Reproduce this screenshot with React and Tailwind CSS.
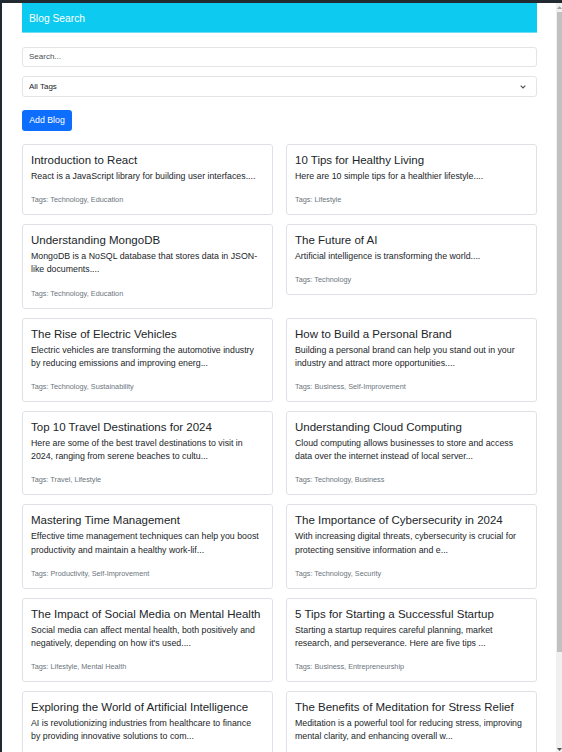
import React from "react";

const blogs = [
  { title: "Introduction to React", desc: "React is a JavaScript library for building user interfaces....", tags: "Technology, Education" },
  { title: "10 Tips for Healthy Living", desc: "Here are 10 simple tips for a healthier lifestyle....", tags: "Lifestyle" },
  { title: "Understanding MongoDB", desc: "MongoDB is a NoSQL database that stores data in JSON-like documents....", tags: "Technology, Education" },
  { title: "The Future of AI", desc: "Artificial intelligence is transforming the world....", tags: "Technology" },
  { title: "The Rise of Electric Vehicles", desc: "Electric vehicles are transforming the automotive industry by reducing emissions and improving energ...", tags: "Technology, Sustainability" },
  { title: "How to Build a Personal Brand", desc: "Building a personal brand can help you stand out in your industry and attract more opportunities....", tags: "Business, Self-Improvement" },
  { title: "Top 10 Travel Destinations for 2024", desc: "Here are some of the best travel destinations to visit in 2024, ranging from serene beaches to cultu...", tags: "Travel, Lifestyle" },
  { title: "Understanding Cloud Computing", desc: "Cloud computing allows businesses to store and access data over the internet instead of local server...", tags: "Technology, Business" },
  { title: "Mastering Time Management", desc: "Effective time management techniques can help you boost productivity and maintain a healthy work-lif...", tags: "Productivity, Self-Improvement" },
  { title: "The Importance of Cybersecurity in 2024", desc: "With increasing digital threats, cybersecurity is crucial for protecting sensitive information and e...", tags: "Technology, Security" },
  { title: "The Impact of Social Media on Mental Health", desc: "Social media can affect mental health, both positively and negatively, depending on how it's used....", tags: "Lifestyle, Mental Health" },
  { title: "5 Tips for Starting a Successful Startup", desc: "Starting a startup requires careful planning, market research, and perseverance. Here are five tips ...", tags: "Business, Entrepreneurship" },
  { title: "Exploring the World of Artificial Intelligence", desc: "AI is revolutionizing industries from healthcare to finance by providing innovative solutions to com...", tags: "Technology, Innovation" },
  { title: "The Benefits of Meditation for Stress Relief", desc: "Meditation is a powerful tool for reducing stress, improving mental clarity, and enhancing overall w...", tags: "Lifestyle, Health" },
];

function Card({ b }) {
  return (
    <div className="border border-[#dee2e6] rounded-[3px] bg-white pl-[8px] pr-[10px] py-[9px]">
      <h5 className="text-[11.5px] leading-[12px] mb-[4px] text-[#212529] whitespace-nowrap">{b.title}</h5>
      <p className="text-[8.8px] leading-[13.2px] mb-[11px] text-[#212529]">{b.desc}</p>
      <p className="text-[7.3px] leading-[11px] text-[#6c757d]">Tags: {b.tags}</p>
    </div>
  );
}

export default function App() {
  return (
    <div className="w-[562px] h-[752px] overflow-hidden bg-[#202a30] pt-[3px] pl-[2px] flex" style={{ fontFamily: '"Liberation Sans", Arial, sans-serif' }}>
      <div className="flex-1 bg-white overflow-hidden">
        <div className="pl-[20px] pr-[19px]">
          <div className="bg-[#0dcaf0] h-[30px] border-b border-[#6fdff5] flex items-center px-[7px] pt-[2px]">
            <span className="text-white text-[10.3px]">Blog Search</span>
          </div>
          <div className="mt-[14px] h-[20px] border border-[#e2e5e8] rounded-[3px] flex items-center px-[6px]">
            <span className="text-[8px] text-[#4a4f55]">Search...</span>
          </div>
          <div className="mt-[9px] h-[21px] border border-[#e2e5e8] rounded-[3px] flex items-center justify-between pl-[6px] pr-[10px]">
            <span className="text-[8px] text-[#212529]">All Tags</span>
            <svg width="6" height="4" viewBox="0 0 6 4" fill="none"><path d="M0.7 0.7l2.3 2.3L5.3 0.7" stroke="#4a4f55" strokeWidth="1.1" /></svg>
          </div>
          <div className="mt-[13px] flex">
            <div className="flex items-center justify-center h-[21px] w-[50px] bg-[#0d6efd] rounded-[3px] text-white text-[8.8px]">Add Blog</div>
          </div>
          <div className="mt-[13px] grid grid-cols-2 gap-x-[13px] gap-y-[9px] items-start">
            {blogs.map((b, i) => (
              <Card key={i} b={b} />
            ))}
          </div>
        </div>
      </div>
      <div className="w-[6px] h-full bg-[#f0f0f0] flex flex-col items-center">
        <div className="h-[9px] flex items-center justify-center">
          <svg width="5" height="3" viewBox="0 0 5 3"><path d="M0 3L2.5 0L5 3Z" fill="#a3a3a3" /></svg>
        </div>
        <div className="w-[5px] ml-[1px] h-[640px] bg-[#c1c1c1]" />
        <div className="flex-1" />
        <div className="h-[6px] flex items-center justify-center">
          <svg width="5" height="3" viewBox="0 0 5 3"><path d="M0 0L2.5 3L5 0Z" fill="#505050" /></svg>
        </div>
      </div>
    </div>
  );
}
